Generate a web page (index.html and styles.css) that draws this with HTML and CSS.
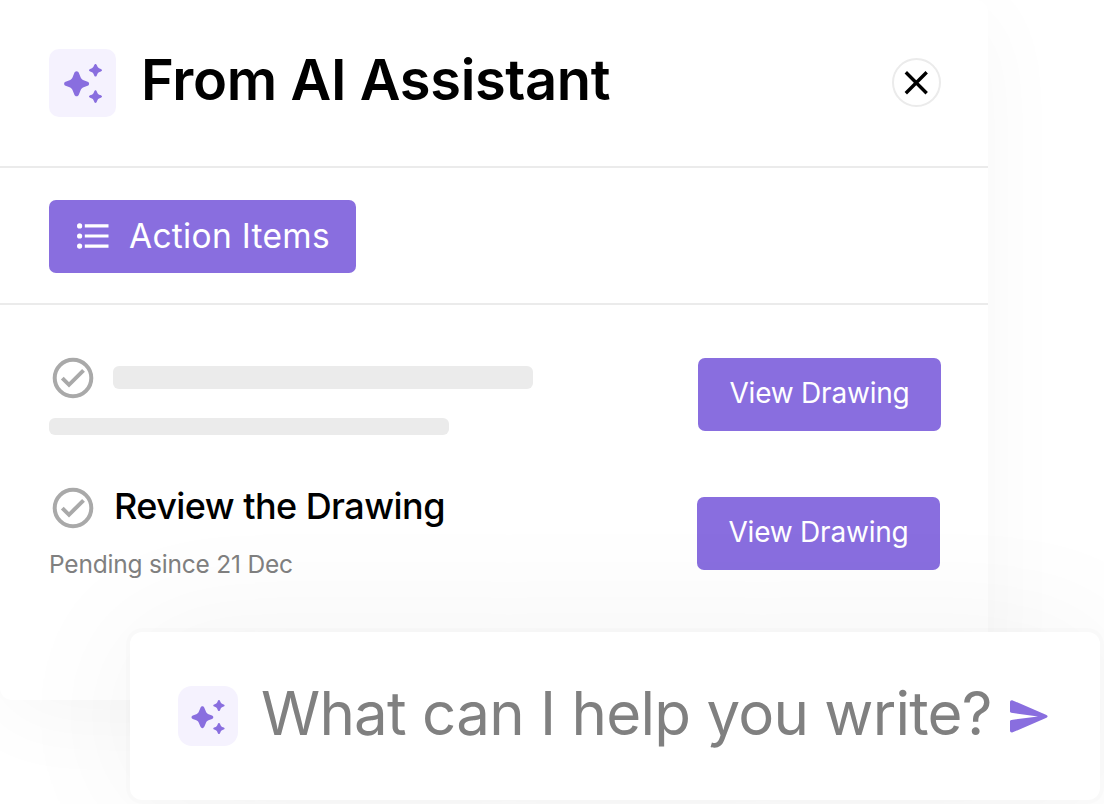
FILE: index.html
```html
<!DOCTYPE html>
<html lang="en">
<head>
<meta charset="utf-8">
<title>From AI Assistant</title>
<link rel="stylesheet" href="styles.css">
</head>
<body>
<svg class="defs" width="0" height="0" aria-hidden="true">
  <symbol id="sparkles" viewBox="0 0 38 40">
    <path d="M12.6 7.200C13.700 7.200 14.500 8 14.900 9L16.600 13.200C17.200 14.700 18.100 15.600 19.600 16.200L23.600 17.700C25.600 18.500 25.600 20.900 23.600 21.700L19.600 23.200C18.100 23.800 17.200 24.700 16.600 26.200L14.900 30.400C14.500 31.400 13.700 32.200 12.600 32.200C11.500 32.200 10.700 31.400 10.300 30.400L8.600 26.200C8 24.700 7.100 23.800 5.600 23.200L1.600 21.700C-.4 20.900-.4 18.500 1.600 17.700L5.600 16.200C7.100 15.600 8 14.700 8.600 13.200L10.300 9C10.700 8 11.500 7.200 12.600 7.200Z"/>
    <path id="small-star" d="M31.5 0C32.2 0 32.600.7 33 1.600C33.700 3.500 34.400 4.200 36.200 4.800C37.300 5.200 38 5.600 38 6.300C38 7 37.300 7.400 36.200 7.800C34.400 8.400 33.700 9.100 33 11C32.600 11.900 32.200 12.600 31.500 12.600C30.800 12.600 30.400 11.900 30 11C29.300 9.100 28.600 8.400 26.800 7.800C25.700 7.400 25 7 25 6.300C25 5.600 25.700 5.200 26.800 4.800C28.600 4.200 29.300 3.500 30 1.600C30.400.7 30.800 0 31.500 0Z"/>
    <use href="#small-star" y="26.300"/>
  </symbol>
  <symbol id="check" viewBox="0 0 42 42">
    <circle cx="21" cy="21" r="18.300" fill="none" stroke="currentColor" stroke-width="4"/>
    <path d="M10.300 21.200L17 27.800L31.500 13.300" fill="none" stroke="currentColor" stroke-width="4"/>
  </symbol>
</svg>
<main class="stage">
  <section class="card">
    <header class="card-header">
      <span class="badge"><svg class="badge-icon"><use href="#sparkles"/></svg></span>
      <h1 class="title"><span>From AI Assistant</span></h1>
      <button class="close" aria-label="Close">
        <svg width="26" height="26" viewBox="0 0 26 26"><path d="M2.800 2.300L23.700 23.200M23.700 2.300L2.800 23.200" stroke="#000" stroke-width="3.400"/></svg>
      </button>
    </header>
    <nav class="tabs">
      <button class="tab">
        <svg width="32" height="26" viewBox="0 0 32 26" fill="#fff">
          <circle cx="2.600" cy="2.900" r="2.600"/><circle cx="2.600" cy="13" r="2.600"/><circle cx="2.600" cy="23.100" r="2.600"/>
          <path d="M7.800 1.300H31.500V4.500H7.800ZM7.800 11.400H31.500V14.600H7.800ZM7.800 21.500H31.500V24.700H7.800Z"/>
        </svg>
        <span class="tab-label">Action Items</span>
      </button>
    </nav>
    <ul class="items">
      <li class="item">
        <div class="item-body">
          <div class="item-row"><svg class="check"><use href="#check"/></svg><span class="bar bar-title"></span></div>
          <span class="bar bar-sub"></span>
        </div>
        <button class="view"><span>View Drawing</span></button>
      </li>
      <li class="item item-second">
        <div class="item-body">
          <div class="item-row"><svg class="check"><use href="#check"/></svg><span class="item-title">Review the Drawing</span></div>
          <span class="item-sub">Pending since 21 Dec</span>
        </div>
        <button class="view"><span>View Drawing</span></button>
      </li>
    </ul>
  </section>
  <section class="composer">
    <span class="badge badge-small"><svg class="badge-icon"><use href="#sparkles"/></svg></span>
    <span class="prompt">What can I help you write?</span>
    <svg class="send" width="38" height="33" viewBox="0 0 38 33"><path d="M0 2.200C0 .6 1.300-.2 2.700.4L36.500 14.900C38 15.600 38 17.100 36.500 17.800L2.700 32.300C1.300 32.900 0 32.100 0 30.500V21.400C0 20.600.5 20.100 1.300 20L28 16.400L1.300 12.800C.5 12.600 0 12.100 0 11.300Z"/></svg>
  </section>
</main>
</body>
</html>
```
FILE: styles.css
```css
* { box-sizing: border-box; }
body { margin: 0; background: #fff; font-family: Inter, "Liberation Sans", sans-serif; }
button { border: 0; padding: 0; font: inherit; }
.defs { position: absolute; }
.stage { position: relative; width: 1104px; height: 804px; overflow: hidden; }
.card {
  width: 988px; height: 700px; background: #fff; border-radius: 0 12px 12px 12px;
  box-shadow: 0 16px 90px rgba(0, 0, 0, .035);
}
.card-header {
  display: flex; align-items: center; height: 167.500px; padding: 0 47.500px 0 48.500px;
  border-bottom: 2px solid #ebebeb;
}
.badge {
  display: flex; align-items: center; justify-content: center; flex: none;
  width: 67.500px; height: 67.500px; border-radius: 10px; background: #f5f2fe; color: #896edf;
}
.badge-icon { width: 38px; height: 40px; margin: 2px 0 0 1px; fill: currentColor; }
.title {
  flex: 1; margin: 0 0 5px 25px; font-size: 56px; line-height: 72px; font-weight: 600;
  letter-spacing: -.35px; color: #000; white-space: nowrap;
}
.close {
  display: flex; align-items: center; justify-content: center; width: 49px; height: 49px;
  border: 2px solid #ebebeb; border-radius: 50%; background: #fff;
}
.tabs { height: 137.500px; padding: 32.500px 48.500px 0; border-bottom: 2px solid #ebebeb; }
.tab {
  display: flex; align-items: center; gap: 20px; width: 307px; height: 72.500px; padding: 0 0 0 28.500px;
  border-radius: 7px; background: #896edf; color: #fff;
}
.tab-label { font-size: 33.500px; line-height: 40px; font-weight: 440; letter-spacing: .3px; white-space: nowrap; padding-bottom: 1px; }
.items { list-style: none; margin: 0; padding: 53px 47px 0 48px; display: flex; flex-direction: column; gap: 66px; }
.item { display: flex; justify-content: space-between; height: 73px; }
.item-second { padding-right: 1px; }
.item-row { display: flex; align-items: center; height: 42px; margin: -1px 0 0 4px; }
.item-second .item-row { margin-top: -10px; }
.check { width: 42px; height: 42px; color: #a9a9a9; flex: none; }
.bar { display: block; background: #ebebeb; border-radius: 6px; }
.bar-title { width: 420px; height: 23px; margin: 0 0 1px 19px; }
.bar-sub { width: 400px; height: 17px; margin: 19px 0 0 .5px; }
.item-title { margin: 0 0 5px 20px; font-size: 36px; line-height: 42px; font-weight: 500; letter-spacing: -.55px; color: #000; white-space: nowrap; }
.item-sub { display: block; margin: 20px 0 0 1px; font-size: 24.500px; line-height: 30px; letter-spacing: -.2px; color: #808080; white-space: nowrap; }
.view {
  display: flex; align-items: center; justify-content: center; width: 243px; height: 72.500px; padding-bottom: 3.500px;
  border-radius: 7px; background: #896edf; color: #fff; font-size: 28px; font-weight: 440; letter-spacing: -.22px; white-space: nowrap; flex: none;
}
.composer {
  position: absolute; left: 130px; top: 632px; width: 970px; height: 168px; padding-left: 48px;
  display: flex; align-items: center; background: #fff; border-radius: 12px;
  box-shadow: 0 0 0 4px rgba(0, 0, 0, .012), 0 0 140px rgba(0, 0, 0, .05);
}
.badge-small { width: 60px; height: 60px; border-radius: 14px; }
.badge-small .badge-icon { width: 34px; height: 35px; margin: 2px 0 0; }
.prompt { width: 749px; margin: 0 0 7px 23px; font-size: 60px; line-height: 72px; letter-spacing: -.74px; color: #808080; white-space: nowrap; }
.send { fill: #896edf; flex: none; }
```
